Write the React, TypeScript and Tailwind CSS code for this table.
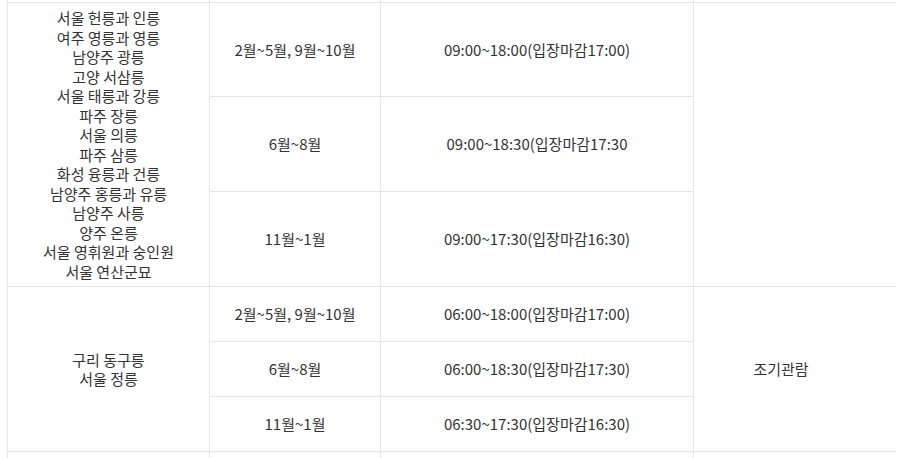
import React from "react";

const FIRST_GROUP = [
  "서울 헌릉과 인릉",
  "여주 영릉과 영릉",
  "남양주 광릉",
  "고양 서삼릉",
  "서울 태릉과 강릉",
  "파주 장릉",
  "서울 의릉",
  "파주 삼릉",
  "화성 융릉과 건릉",
  "남양주 홍릉과 유릉",
  "남양주 사릉",
  "양주 온릉",
  "서울 영휘원과 숭인원",
  "서울 연산군묘",
];

const SECOND_GROUP = ["구리 동구릉", "서울 정릉"];

const ROWS_A = [
  { season: "2월~5월, 9월~10월", hours: "09:00~18:00(입장마감17:00)" },
  { season: "6월~8월", hours: "09:00~18:30(입장마감17:30" },
  { season: "11월~1월", hours: "09:00~17:30(입장마감16:30)" },
];

const ROWS_B = [
  { season: "2월~5월, 9월~10월", hours: "06:00~18:00(입장마감17:00)" },
  { season: "6월~8월", hours: "06:00~18:30(입장마감17:30)" },
  { season: "11월~1월", hours: "06:30~17:30(입장마감16:30)" },
];

const Cell: React.FC<{ className?: string; children?: React.ReactNode }> = ({
  className = "",
  children,
}) => (
  <div
    className={`bg-white flex items-center justify-center text-center ${className}`}
  >
    {children}
  </div>
);

export default function App() {
  return (
    <div className="w-[910px] h-[458px] overflow-hidden bg-white">
      <div
        className="ml-[7px] w-[889px] pl-px grid gap-px bg-[#e6e6e6] text-[15px] leading-[19.5px] text-[#333] grid-cols-[201px_170px_312px_202px] grid-rows-[2px_93px_94px_94px_54px_54px_54px_20px]"
        style={{ fontFamily: '"Noto Sans CJK KR", "Noto Sans", sans-serif' }}
      >
        {/* tail of the row above */}
        <Cell />
        <Cell />
        <Cell />
        <Cell />

        <Cell className="row-span-3 flex-col">
          {FIRST_GROUP.map((name) => (
            <span key={name}>{name}</span>
          ))}
        </Cell>
        <Cell>{ROWS_A[0].season}</Cell>
        <Cell>{ROWS_A[0].hours}</Cell>
        <Cell className="row-span-3" />
        <Cell>{ROWS_A[1].season}</Cell>
        <Cell>{ROWS_A[1].hours}</Cell>
        <Cell>{ROWS_A[2].season}</Cell>
        <Cell>{ROWS_A[2].hours}</Cell>

        <Cell className="row-span-3 flex-col">
          {SECOND_GROUP.map((name) => (
            <span key={name}>{name}</span>
          ))}
        </Cell>
        <Cell>{ROWS_B[0].season}</Cell>
        <Cell>{ROWS_B[0].hours}</Cell>
        <Cell className="row-span-3 pr-[28px]">조기관람</Cell>
        <Cell>{ROWS_B[1].season}</Cell>
        <Cell>{ROWS_B[1].hours}</Cell>
        <Cell>{ROWS_B[2].season}</Cell>
        <Cell>{ROWS_B[2].hours}</Cell>

        {/* head of the row below */}
        <Cell />
        <Cell />
        <Cell />
        <Cell />
      </div>
    </div>
  );
}
